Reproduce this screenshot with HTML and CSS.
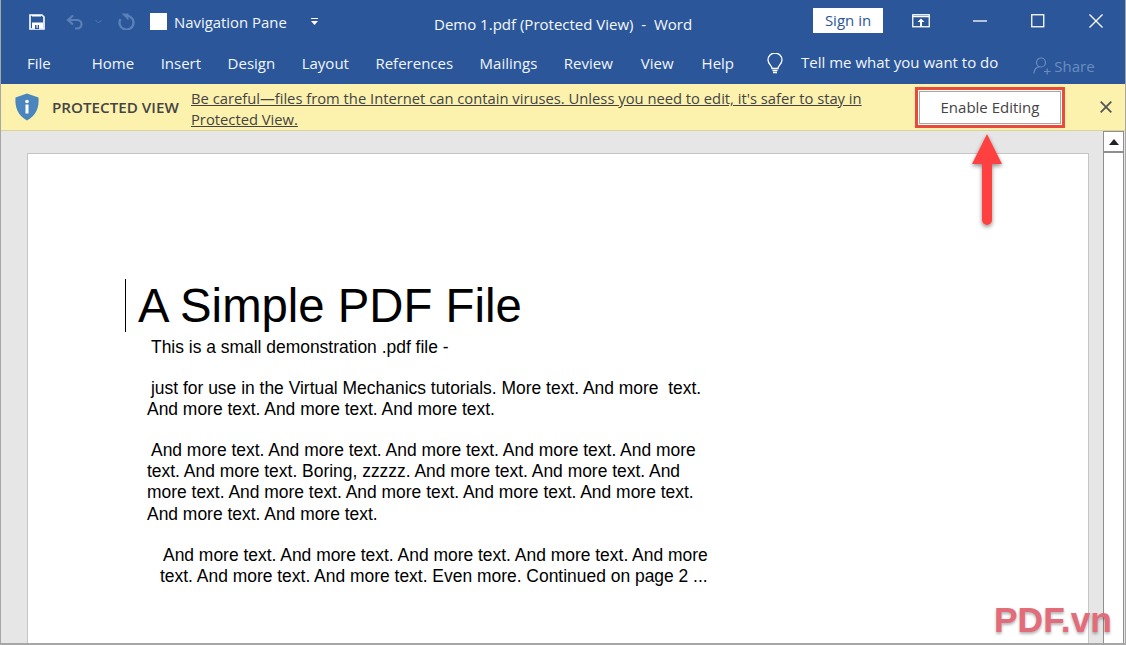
FILE: index.html
```html
<!DOCTYPE html>
<html lang="en">
<head>
<meta charset="utf-8">
<title>Demo 1.pdf (Protected View) - Word</title>
<link rel="stylesheet" href="styles.css">
</head>
<body>
<div class="window">
  <header class="ribbon">
    <div class="titlebar">
      <div class="qat">
        <svg class="ic-save" width="16" height="16" viewBox="0 0 16 16"><path d="M1 1h12l2 2v12H1z" fill="none" stroke="#fff" stroke-width="1.600"/><rect x="3" y="8.500" width="11" height="6" fill="#fff"/><rect x="3" y="1" width="9" height="1.500" fill="#fff"/><rect x="6" y="11" width="4" height="4" fill="#2b579a"/><rect x="7.500" y="11" width="1.200" height="3" fill="#fff"/></svg>
        <svg class="ic-undo" width="18" height="16" viewBox="0 0 18 16"><path d="M7 1.500 2 6l5 4.500M2.500 6H11c6 0 6 8.500 0 8.500H9" fill="none" stroke="#5a80b8" stroke-width="2.200"/></svg>
        <svg class="ic-drop" width="7" height="5" viewBox="0 0 7 5"><path d="M.5 1 3.500 4l3-3" fill="none" stroke="#4f76af" stroke-width="1"/></svg>
        <svg class="ic-redo" width="17" height="17" viewBox="0 0 17 17"><path d="M9 2.600A7 7 0 1 1 2.500 6" fill="none" stroke="#5a80b8" stroke-width="2.400"/><path d="M3.500.5h7V7.500z" fill="#5a80b8"/></svg>
        <span class="check"></span>
        <span class="qat-label">Navigation Pane</span>
        <svg class="ic-more" width="7" height="8" viewBox="0 0 7 8"><path d="M0 .5h7" stroke="#fff" stroke-width="1"/><path d="M0 3h7L3.500 7z" fill="#fff"/></svg>
      </div>
      <div class="doc-title">Demo 1.pdf (Protected View)&nbsp; -&nbsp; Word</div>
      <div class="win-controls">
        <button class="signin">Sign in</button>
        <svg class="ic-display" width="18" height="14" viewBox="0 0 18 14"><rect x=".75" y=".75" width="16.500" height="12" fill="none" stroke="#fff" stroke-width="1.300"/><path d="M.75 2.500h16.500" stroke="#fff" stroke-width="1.500"/><path d="M9 4.500 5.500 8H8v4.500h2V8h2.500z" fill="#fff"/></svg>
        <svg class="ic-min" width="14" height="2" viewBox="0 0 14 2"><path d="M0 1h14" stroke="#fff" stroke-width="1.300"/></svg>
        <svg class="ic-max" width="14" height="14" viewBox="0 0 14 14"><rect x=".75" y=".75" width="12" height="12" fill="none" stroke="#fff" stroke-width="1.300"/></svg>
        <svg class="ic-close" width="14" height="14" viewBox="0 0 14 14"><path d="M.5.500l13 13M13.500.500l-13 13" stroke="#fff" stroke-width="1.300"/></svg>
      </div>
    </div>
    <nav class="tabs">
      <span class="tab tab-file">File</span>
      <span class="tab">Home</span>
      <span class="tab">Insert</span>
      <span class="tab">Design</span>
      <span class="tab">Layout</span>
      <span class="tab">References</span>
      <span class="tab">Mailings</span>
      <span class="tab">Review</span>
      <span class="tab">View</span>
      <span class="tab">Help</span>
      <svg class="ic-bulb" width="16" height="22" viewBox="0 0 16 22"><path d="M5 15.500c0-3-4-4.500-4-8.500a7 7 0 0 1 14 0c0 4-4 5.500-4 8.500z" fill="none" stroke="#fff" stroke-width="1.300"/><path d="M5.500 17.500h5M6 19.500h4" stroke="#fff" stroke-width="1.300"/></svg>
      <span class="tell">Tell me what you want to do</span>
      <span class="share">
        <svg width="18" height="18" viewBox="0 0 18 18"><circle cx="8" cy="5.500" r="4.500" fill="none" stroke="#6b8dbe" stroke-width="1.200"/><path d="M.8 16.500c.5-4 3-6.500 6-6.800M11 14.500h6.500M14.200 11.500v6" fill="none" stroke="#6b8dbe" stroke-width="1.200"/></svg>
        Share
      </span>
    </nav>
  </header>

  <section class="notice">
    <svg class="shield" width="26" height="28" viewBox="0 0 26 28"><path d="M13 .5 24.500 4.500c.8 10.500-2.500 18-11.500 23C4 22.500.7 15 1.500 4.500z" fill="#4a86bd"/><circle cx="13" cy="8.500" r="1.800" fill="#fff"/><rect x="11.500" y="11.500" width="3" height="9" fill="#fff"/></svg>
    <strong class="notice-label">PROTECTED VIEW</strong>
    <a class="notice-text">Be careful—files from the Internet can contain viruses. Unless you need to edit, it's safer to stay in Protected View.</a>
    <div class="enable-frame"><button class="enable">Enable Editing</button></div>
    <svg class="notice-close" width="12" height="12" viewBox="0 0 12 12"><path d="M.7.700l10.600 10.600M11.300.700.700 11.300" stroke="#555" stroke-width="1.800"/></svg>
  </section>

  <main class="workspace">
    <div class="canvas">
      <article class="page">
        <span class="caret"></span>
        <h1 class="pdf-title">A Simple PDF File</h1>
        <p class="ln i-151 first">This is a small demonstration .pdf file -</p>
        <p class="ln i-151 gap">just for use in the Virtual Mechanics tutorials. More text. And more&nbsp; text.</p>
        <p class="ln i-147">And more text. And more text. And more text.</p>
        <p class="ln i-151 gap">And more text. And more text. And more text. And more text. And more</p>
        <p class="ln i-147">text. And more text. Boring, zzzzz. And more text. And more text. And</p>
        <p class="ln i-147">more text. And more text. And more text. And more text. And more text.</p>
        <p class="ln i-147 drop">And more text. And more text.</p>
        <p class="ln i-163 gap">And more text. And more text. And more text. And more text. And more</p>
        <p class="ln i-160">text. And more text. And more text. Even more. Continued on page 2 ...</p>
      </article>
    </div>
    <aside class="scrollbar">
      <div class="scroll-up"><svg width="10" height="6" viewBox="0 0 10 6"><path d="M5 0l5 6H0z" fill="#222"/></svg></div>
    </aside>
  </main>

  <svg class="arrow" width="50" height="104" viewBox="0 0 50 104">
    <defs><filter id="sh" x="-50%" y="-20%" width="200%" height="140%"><feDropShadow dx="0" dy="2" stdDeviation="2" flood-color="#000" flood-opacity=".45"/></filter></defs>
    <path d="M25 2 40 32H30V88a5 5 0 0 1-10 0V32H10z" fill="#ff4040" filter="url(#sh)"/>
  </svg>
  <div class="watermark">PDF.vn</div>
</div>
</body>
</html>
```
FILE: styles.css
```css
* { box-sizing: border-box; }
html, body { margin: 0; height: 100%; overflow: hidden; }
body { width: 1126px; height: 645px; background: #fff; font-family: "Open Sans", "Noto Sans", sans-serif; }
svg { display: block; flex: none; }

.window {
  position: relative;
  width: 1126px;
  height: 645px;
  display: flex;
  flex-direction: column;
  border: 1px solid #a6a6a6;
  border-top: 0;
  border-bottom: 2px solid #a6a6a6;
  overflow: hidden;
}

.ribbon { background: #2b579a; color: #fff; height: 84px; flex: none; }

.titlebar { height: 44px; display: flex; align-items: center; position: relative; }
.qat { display: flex; align-items: center; padding-left: 28px; padding-bottom: 1px; }
.ic-undo { margin-left: 21px; }
.ic-drop { margin-left: 11px; }
.ic-redo { margin-left: 16px; }
.check { width: 17px; height: 17px; background: #fff; margin-left: 15px; }
.qat-label { margin-left: 7px; color: #f2f5fa; width: 137px; white-space: nowrap; font-size: 14.900px; }

.doc-title { position: absolute; left: 433px; top: 14px; font-size: 15px; line-height: 20px; white-space: nowrap; color: #f5f7fb; }

.win-controls { margin-left: auto; display: flex; align-items: center; padding-right: 22px; padding-bottom: 2px; }
.signin { width: 70px; height: 25px; border: 0; padding: 0; background: #fff; color: #2b579a; font: 15px/25px "Open Sans", sans-serif; margin-bottom: 1px; }
.ic-display { margin-left: 29px; }
.ic-min { margin-left: 43px; }
.ic-max { margin-left: 44px; }
.ic-close { margin-left: 44px; }

.tabs { height: 40px; display: flex; align-items: center; padding-left: 26px; font-size: 15px; color: #f2f5fa; white-space: nowrap; }
.tab { margin-right: 26.500px; position: relative; top: -1px; }
.tab:nth-child(n+8) { margin-right: 28px; }
.tab-file { margin-right: 41px; }
.ic-bulb { margin-left: 5px; margin-right: 18px; }
.tell { position: relative; top: -2px; }
.share { display: flex; align-items: center; gap: 3px; color: #6b8dbe; margin-left: 35px; margin-top: 3px; }

.notice { height: 47px; flex: none; background: #fcf2ae; border-bottom: 1px solid #d8d49a; display: flex; align-items: center; padding-left: 13px; position: relative; }
.notice-label { margin-left: 12px; font-size: 15.200px; font-weight: 600; color: #444; white-space: nowrap; width: 139px; }
.notice-text { width: 690px; font-size: 14.750px; line-height: 21px; color: #444; text-decoration: underline; padding-top: 3px; }
.enable-frame { margin-left: 34px; border: 3px solid #ea4a3c; padding: 1px; background: #fff; width: 150px; height: 41px; }
.enable { display: block; width: 100%; height: 100%; background: #fff; border: 1px solid #aca899; padding: 0; font: 15px "Open Sans", sans-serif; color: #444; }
.notice-close { margin-left: 35px; }

.workspace { flex: 1; display: flex; background: #e6e6e6; min-height: 0; }
.canvas { flex: 1; padding: 22px 0 0 26px; }
.page { width: 1062px; height: 520px; background: #fff; border: 1px solid #c6c6c6; position: relative; padding-top: 122px; font-family: "Liberation Sans", Arial, sans-serif; color: #000; }
.caret { position: absolute; left: 97px; top: 125px; width: 1px; height: 53px; background: #000; }
.pdf-title { margin: 0 0 0 110px; font-size: 47.300px; font-weight: 400; line-height: 60px; white-space: nowrap; }

.ln { margin: 0; font-size: 17.450px; line-height: 21px; white-space: nowrap; }
.ln.first { margin-top: 1px; }
.ln.gap { margin-top: 20px; }
.ln.drop { margin-top: 1px; }
.i-151 { padding-left: 123px; }
.i-147 { padding-left: 119px; }
.i-163 { padding-left: 135px; }
.i-160 { padding-left: 132px; }

.scrollbar { width: 21px; margin-right: 1px; flex: none; background: #fff; border: 1px solid #8e8e8e; border-bottom: 0; }
.scroll-up { height: 21px; border-bottom: 2px solid #8e8e8e; display: flex; align-items: center; justify-content: center; }

.arrow { position: absolute; left: 961px; top: 132px; }
.watermark { position: absolute; left: 993px; top: 600px; font: 700 35.400px/40px "Liberation Sans", Arial, sans-serif; color: #e36c7a; text-shadow: 0 2px 3px rgba(0,0,0,.3); white-space: nowrap; }
```
